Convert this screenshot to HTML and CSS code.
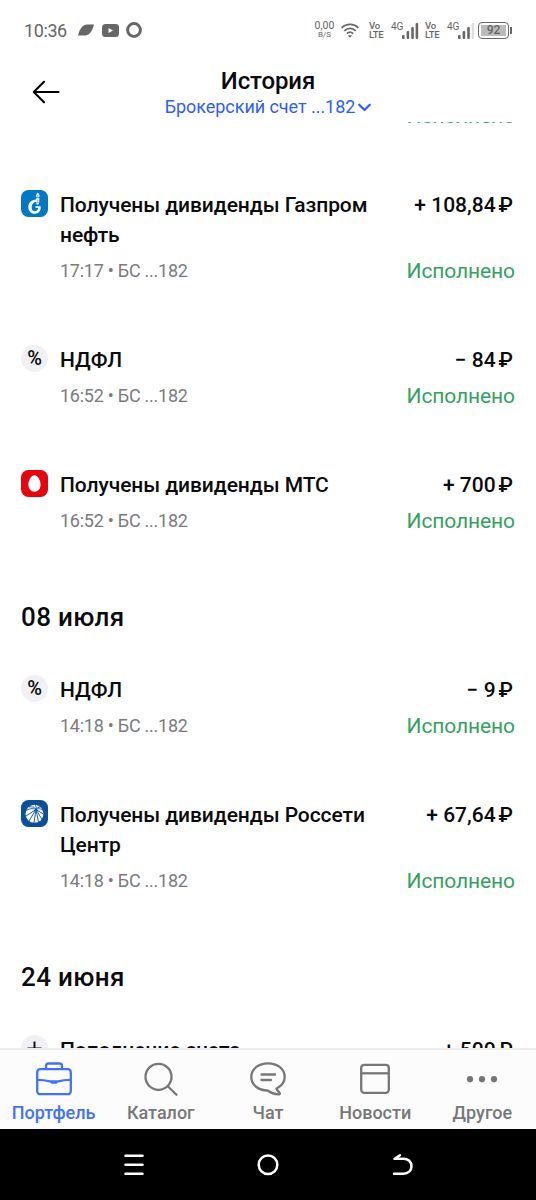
FILE: index.html
```html
<!DOCTYPE html>
<html lang="ru">
<head>
    <meta charset="UTF-8" />
    <meta name="viewport" content="width=device-width, initial-scale=1.0"/>
    <title>История</title>
    <link rel="stylesheet" href="styles.css">
</head>
<body>
    <!-- Phone status bar -->
    <div class="status-bar">
        <div class="status-left">
            <span class="clock">10:36</span>
            <svg class="status-leaf" width="16" height="12" viewBox="0 0 16 12"><path d="M0 11.5C2 4 5 .5 9 .5h7C14 8 11 11.5 7 11.5z" fill="#666"/></svg>
            <svg class="status-video" width="17" height="13" viewBox="0 0 17 13"><rect width="17" height="13" rx="3.5" fill="#666"/><path d="M6.5 4v5l4.5-2.5z" fill="#fff"/></svg>
            <svg class="status-ring" width="16" height="16" viewBox="0 0 16 16"><circle cx="8" cy="8" r="6.4" fill="none" stroke="#666" stroke-width="3"/></svg>
        </div>
        <div class="status-right">
            <div class="net-speed"><b>0,00</b><span>B/S</span></div>
            <svg class="wifi" width="18" height="15" viewBox="0 0 18 15" fill="none" stroke="#666" stroke-width="1.8">
                <path d="M.7 4.8C5.4.2 12.6.2 17.3 4.8M3.3 7.8c3.3-3.2 8.1-3.2 11.4 0M5.9 10.6c1.8-1.7 4.4-1.7 6.2 0"/>
                <path d="M6.8 12.2h4.4L9 14.7z" fill="#666" stroke="none"/>
            </svg>
            <div class="volte"><span>Vo</span><span>LTE</span></div>
            <div class="signal">
                <span>4G</span>
                <svg width="17" height="17" viewBox="0 0 17 17" fill="#666"><rect x="0" y="13" width="2.6" height="4" rx="1"/><rect x="4.6" y="9" width="2.6" height="8" rx="1"/><rect x="9.2" y="5" width="2.6" height="12" rx="1"/><rect x="13.6" y="1" width="2.6" height="16" rx="1"/></svg>
            </div>
            <div class="volte"><span>Vo</span><span>LTE</span></div>
            <div class="signal weak">
                <span>4G</span>
                <svg width="17" height="17" viewBox="0 0 17 17" fill="#666"><rect x="0" y="13" width="2.6" height="4" rx="1"/><rect x="4.6" y="9" width="2.6" height="8" rx="1"/><rect x="9.2" y="5" width="2.6" height="12" rx="1"/><rect x="13.6" y="1" width="2.6" height="16" rx="1" fill="#ddd"/></svg>
            </div>
            <div class="battery"><span>92</span></div>
        </div>
    </div>

    <!-- Page header with account selector -->
    <header class="header">
        <svg class="back" width="28" height="24" viewBox="0 0 28 24" fill="none" stroke="#000" stroke-width="2.1" stroke-linecap="round" stroke-linejoin="round"><path d="M26.5 12H1.8M12 1.800L1.800 12l10.200 10.200"/></svg>
        <div class="header-text">
            <h1>История</h1>
            <div class="account">
                <span>Брокерский счет ...182</span>
                <svg width="13" height="9" viewBox="0 0 13 9" fill="none" stroke="#2f5dfb" stroke-width="2.2" stroke-linecap="round" stroke-linejoin="round"><path d="M1.200 1.700l5.300 5.300 5.300-5.300"/></svg>
            </div>
        </div>
    </header>

    <!-- Operations list, scrolled -->
    <main class="feed">
        <div class="operation scrolled">
            <div class="info"></div>
            <div class="result"><span class="state">Исполнено</span></div>
        </div>

        <div class="operation">
            <svg class="logo" width="27" height="27" viewBox="0 0 27 27">
                <rect width="27" height="27" rx="7.5" fill="#0079c2"/>
                <path d="M15.300 9.600C10.500 9.800 7.200 12.800 7.300 17.200c.1 4 3 6.600 6.600 6.500 3.300 0 5.400-2 5.700-4.600v-2.900h-5.200v1.500h2.700c0 2.200-1.400 3.500-3.200 3.500-2.100 0-3.400-1.600-3.300-4 .1-2.900 1.900-5 4.700-5.400z" fill="#fff"/>
                <path d="M14.900 8.300h3.600l-.6 6.200h-2.300zM16.800 2.600c2.300 2.600 2.100 3.900.9 5h-1.900c-1.200-1.200-1-2.800 1-5z" fill="#fff"/>
                <path d="M16.800 5v2.300M16.700 9.500v3.500" stroke="#0079c2" stroke-width=".6"/>
            </svg>
            <div class="info">
                <h3>Получены дивиденды Газпром нефть</h3>
                <p>17:17 • БС ...182</p>
            </div>
            <div class="result">
                <span class="amount">+ 108,84<i>₽</i></span>
                <span class="state">Исполнено</span>
            </div>
        </div>

        <div class="operation">
            <div class="logo badge">%</div>
            <div class="info">
                <h3>НДФЛ</h3>
                <p>16:52 • БС ...182</p>
            </div>
            <div class="result">
                <span class="amount">− 84<i>₽</i></span>
                <span class="state">Исполнено</span>
            </div>
        </div>

        <div class="operation">
            <svg class="logo" width="27" height="27" viewBox="0 0 27 27">
                <rect width="27" height="27" rx="7.5" fill="#e30611"/>
                <path d="M13.5 5.300c3.200 0 6.100 5 6.100 9.200 0 4.300-2.500 7.200-6.100 7.200s-6.100-2.900-6.100-7.200c0-4.200 2.900-9.200 6.100-9.200z" fill="#fff"/>
            </svg>
            <div class="info">
                <h3>Получены дивиденды МТС</h3>
                <p>16:52 • БС ...182</p>
            </div>
            <div class="result">
                <span class="amount">+ 700<i>₽</i></span>
                <span class="state">Исполнено</span>
            </div>
        </div>

        <h2>08 июля</h2>

        <div class="operation">
            <div class="logo badge">%</div>
            <div class="info">
                <h3>НДФЛ</h3>
                <p>14:18 • БС ...182</p>
            </div>
            <div class="result">
                <span class="amount">− 9<i>₽</i></span>
                <span class="state">Исполнено</span>
            </div>
        </div>

        <div class="operation">
            <svg class="logo" width="27" height="27" viewBox="0 0 27 27">
                <rect width="27" height="27" rx="7.5" fill="#0b4f98"/>
                <circle cx="13.5" cy="13.8" r="9" fill="#fff"/>
                <g fill="none" stroke="#0b4f98" stroke-width=".9">
                    <path d="M15 9.500L5 16M15 9.500L8 21M15 9.500L13 23M15 9.500l2.500 13M15 9.500l6 10M15 9.500l8 5"/>
                    <path d="M4.500 11c3.500-2.500 7-3 10.500-1.500 3-1.500 6-.5 8 1.500M15 9.500C13.500 7 11 6.300 8 7M15 9.500c.5-2 0-3.500-1-5M15 9.500c1-1.500 2.500-2.300 4.500-2.500"/>
                </g>
            </svg>
            <div class="info">
                <h3>Получены дивиденды Россети Центр</h3>
                <p>14:18 • БС ...182</p>
            </div>
            <div class="result">
                <span class="amount">+ 67,64<i>₽</i></span>
                <span class="state">Исполнено</span>
            </div>
        </div>

        <h2>24 июня</h2>

        <div class="operation">
            <svg class="logo" width="27" height="27" viewBox="0 0 27 27">
                <circle cx="13.5" cy="13.5" r="13.5" fill="#f0f0f5"/>
                <path d="M13.5 6.500v14M6.500 13.500h14" stroke="#111" stroke-width="2"/>
            </svg>
            <div class="info">
                <h3>Пополнение счета</h3>
            </div>
            <div class="result">
                <span class="amount">+ 500<i>₽</i></span>
            </div>
        </div>
    </main>

    <!-- Bottom tabs -->
    <nav class="tabs">
        <a class="tab active">
            <svg width="36" height="34" viewBox="0 0 36 34" fill="none" stroke="currentColor" stroke-width="2.3" stroke-linejoin="round">
                <rect x="1.2" y="7.2" width="33.6" height="25" rx="3"/>
                <path d="M10 7V4q0-2.500 2.500-2.500h11Q26 1.500 26 4v3M1.500 17.800q6.500 0 12.500 1.500h8q6-1.500 12.500-1.500"/>
                <path d="M13.500 19h9l-1.800 2.800h-5.400z" fill="currentColor" stroke="none"/>
            </svg>
            <span>Портфель</span>
        </a>
        <a class="tab">
            <svg width="36" height="34" viewBox="0 0 36 34" fill="none" stroke="currentColor" stroke-width="2.3" stroke-linecap="round"><circle cx="15.500" cy="14.800" r="13"/><path d="M24.800 24.200l8.700 8.500"/></svg>
            <span>Каталог</span>
        </a>
        <a class="tab">
            <svg width="36" height="34" viewBox="0 0 36 34" fill="none" stroke="currentColor" stroke-width="2.3" stroke-linecap="round" stroke-linejoin="round">
                <path d="M26.500 26.500c5-2.500 8.200-6.500 8.200-11.500C34.700 7 27.500 1.400 18 1.400S1.300 7 1.300 15 8.500 28.500 17.500 28.500c3.500 2.500 7.500 4 11.500 3.800 1-.2 1.200-.9.500-1.600-1.200-1-2.300-2.400-3-4.200z"/>
                <path d="M11.500 12.500h13.500M11.500 18h9.500"/>
            </svg>
            <span>Чат</span>
        </a>
        <a class="tab">
            <svg width="36" height="34" viewBox="0 0 36 34" fill="none" stroke="currentColor" stroke-width="2.3"><rect x="4.200" y="2.800" width="27.600" height="28" rx="3"/><path d="M4.200 11.300h27.600"/></svg>
            <span>Новости</span>
        </a>
        <a class="tab">
            <svg width="36" height="34" viewBox="0 0 36 34" fill="currentColor"><circle cx="6" cy="17.200" r="3.100"/><circle cx="18" cy="17.200" r="3.100"/><circle cx="30" cy="17.200" r="3.100"/></svg>
            <span>Другое</span>
        </a>
    </nav>

    <!-- System navigation -->
    <div class="system-nav">
        <svg width="24" height="24" viewBox="0 0 24 24" stroke="#fff" stroke-width="2.6" stroke-linecap="round"><path d="M3.500 2.800h17M3.500 11.700h17M3.500 20.700h17"/></svg>
        <svg width="24" height="24" viewBox="0 0 24 24" fill="none" stroke="#fff" stroke-width="2.5"><circle cx="12" cy="11.700" r="9.300"/></svg>
        <svg width="24" height="24" viewBox="0 0 24 24" fill="none" stroke="#fff" stroke-width="2.5" stroke-linecap="round" stroke-linejoin="round"><path d="M4 20.700h9.500c4.500 0 8-3 8-7.500s-3.500-7.500-8-7.500H4.500l5.500-3.500"/></svg>
    </div>
</body>
</html>
```
FILE: styles.css
```css
* {
    box-sizing: border-box;
    margin: 0;
    padding: 0;
}

body {
    height: 1200px;
    display: flex;
    flex-direction: column;
    overflow: hidden;
    background: #fff;
    color: #0b0b0d;
    font-family: Roboto, sans-serif;
}

svg {
    display: block;
    flex: none;
}

/* Phone status bar */
.status-bar {
    height: 60px;
    flex: none;
    display: flex;
    justify-content: space-between;
    align-items: center;
    padding: 0 24px;
    color: #666;
}

.status-left,
.status-right {
    display: flex;
    align-items: center;
}

.clock {
    width: 54px;
    font-size: 18px;
    letter-spacing: -0.4px;
}

.status-video {
    margin: 0 7px 0 8px;
}

.net-speed,
.volte {
    display: flex;
    flex-direction: column;
    line-height: 9px;
}

.net-speed {
    width: 21px;
    align-items: center;
    font-size: 8px;
}

.net-speed b {
    font-size: 10.5px;
    font-weight: 400;
}

.wifi {
    margin: 0 10px 0 6px;
}

.volte {
    width: 15px;
    margin-right: 7px;
    font-size: 9.5px;
    font-weight: 500;
    letter-spacing: -0.2px;
}

.signal {
    display: flex;
    height: 17px;
    margin-right: 6px;
}

.signal.weak {
    margin-right: 3px;
}

.signal span {
    width: 11px;
    font-size: 10px;
    line-height: 9px;
}

.battery {
    width: 31px;
    height: 17px;
    border: 1.5px solid #666;
    border-radius: 4px;
    padding: 2px;
}

.battery span {
    display: block;
    height: 11px;
    background: #bbb;
    font-size: 12px;
    font-weight: 500;
    line-height: 11px;
    text-align: center;
}

.status-right::after {
    content: "";
    width: 2px;
    height: 7px;
    margin-left: 1px;
    background: #666;
}

/* Header */
.header {
    height: 62px;
    flex: none;
    display: grid;
    grid-template-columns: 60px 1fr 60px;
}

.back {
    margin: 20px 0 0 32px;
}

.header-text {
    text-align: center;
    padding-top: 6px;
}

.header h1 {
    font-size: 24px;
    font-weight: 500;
    letter-spacing: -0.1px;
    line-height: 30px;
}

.account {
    display: flex;
    justify-content: center;
    align-items: center;
    gap: 3px;
    color: #2f5dfb;
    font-size: 18px;
    letter-spacing: -0.05px;
    line-height: 22px;
}

/* Operations */
.feed {
    flex: 1;
    min-height: 0;
    overflow: hidden;
    padding: 0 21px;
}

.feed h2 {
    height: 80px;
    font-size: 26px;
    font-weight: 500;
    letter-spacing: 0.35px;
    line-height: 44px;
}

.operation {
    display: flex;
    padding-bottom: 60px;
}

.operation.scrolled {
    height: 68px;
    align-items: flex-end;
}

.logo {
    width: 27px;
    height: 27px;
    flex: none;
    margin-right: 12px;
}

.badge {
    border-radius: 50%;
    background: #f0f0f5;
    font-size: 20px;
    font-weight: 500;
    line-height: 27px;
    text-align: center;
}

.info {
    flex: 1;
    padding-right: 20px;
}

.info h3 {
    font-size: 21px;
    font-weight: 500;
    letter-spacing: -0.07px;
    line-height: 30px;
}

.info p {
    height: 28px;
    margin-top: 7px;
    color: #7b7b7e;
    font-size: 18px;
    letter-spacing: -0.25px;
    line-height: 27px;
}

.result {
    display: flex;
    flex-direction: column;
    justify-content: space-between;
    align-items: flex-end;
    white-space: nowrap;
}

.amount {
    margin-right: 2px;
    font-size: 21px;
    font-weight: 500;
    line-height: 30px;
}

.amount i {
    font-style: normal;
    margin-left: 3px;
}

.state {
    color: #34a061;
    font-size: 21px;
    letter-spacing: -0.1px;
    line-height: 28px;
}

/* Bottom tabs */
.tabs {
    height: 81px;
    flex: none;
    display: grid;
    grid-template-columns: repeat(5, 1fr);
    border-top: 2px solid #ececee;
    background: #fcfcfd;
}

.tab {
    display: flex;
    flex-direction: column;
    align-items: center;
    padding-top: 12px;
    color: #77777a;
    font-size: 18px;
    font-weight: 500;
    line-height: 33px;
}

.tab.active {
    color: #4272fa;
}

/* System navigation */
.system-nav {
    height: 71px;
    flex: none;
    display: flex;
    justify-content: center;
    align-items: center;
    gap: 110px;
    background: #000;
}
```
